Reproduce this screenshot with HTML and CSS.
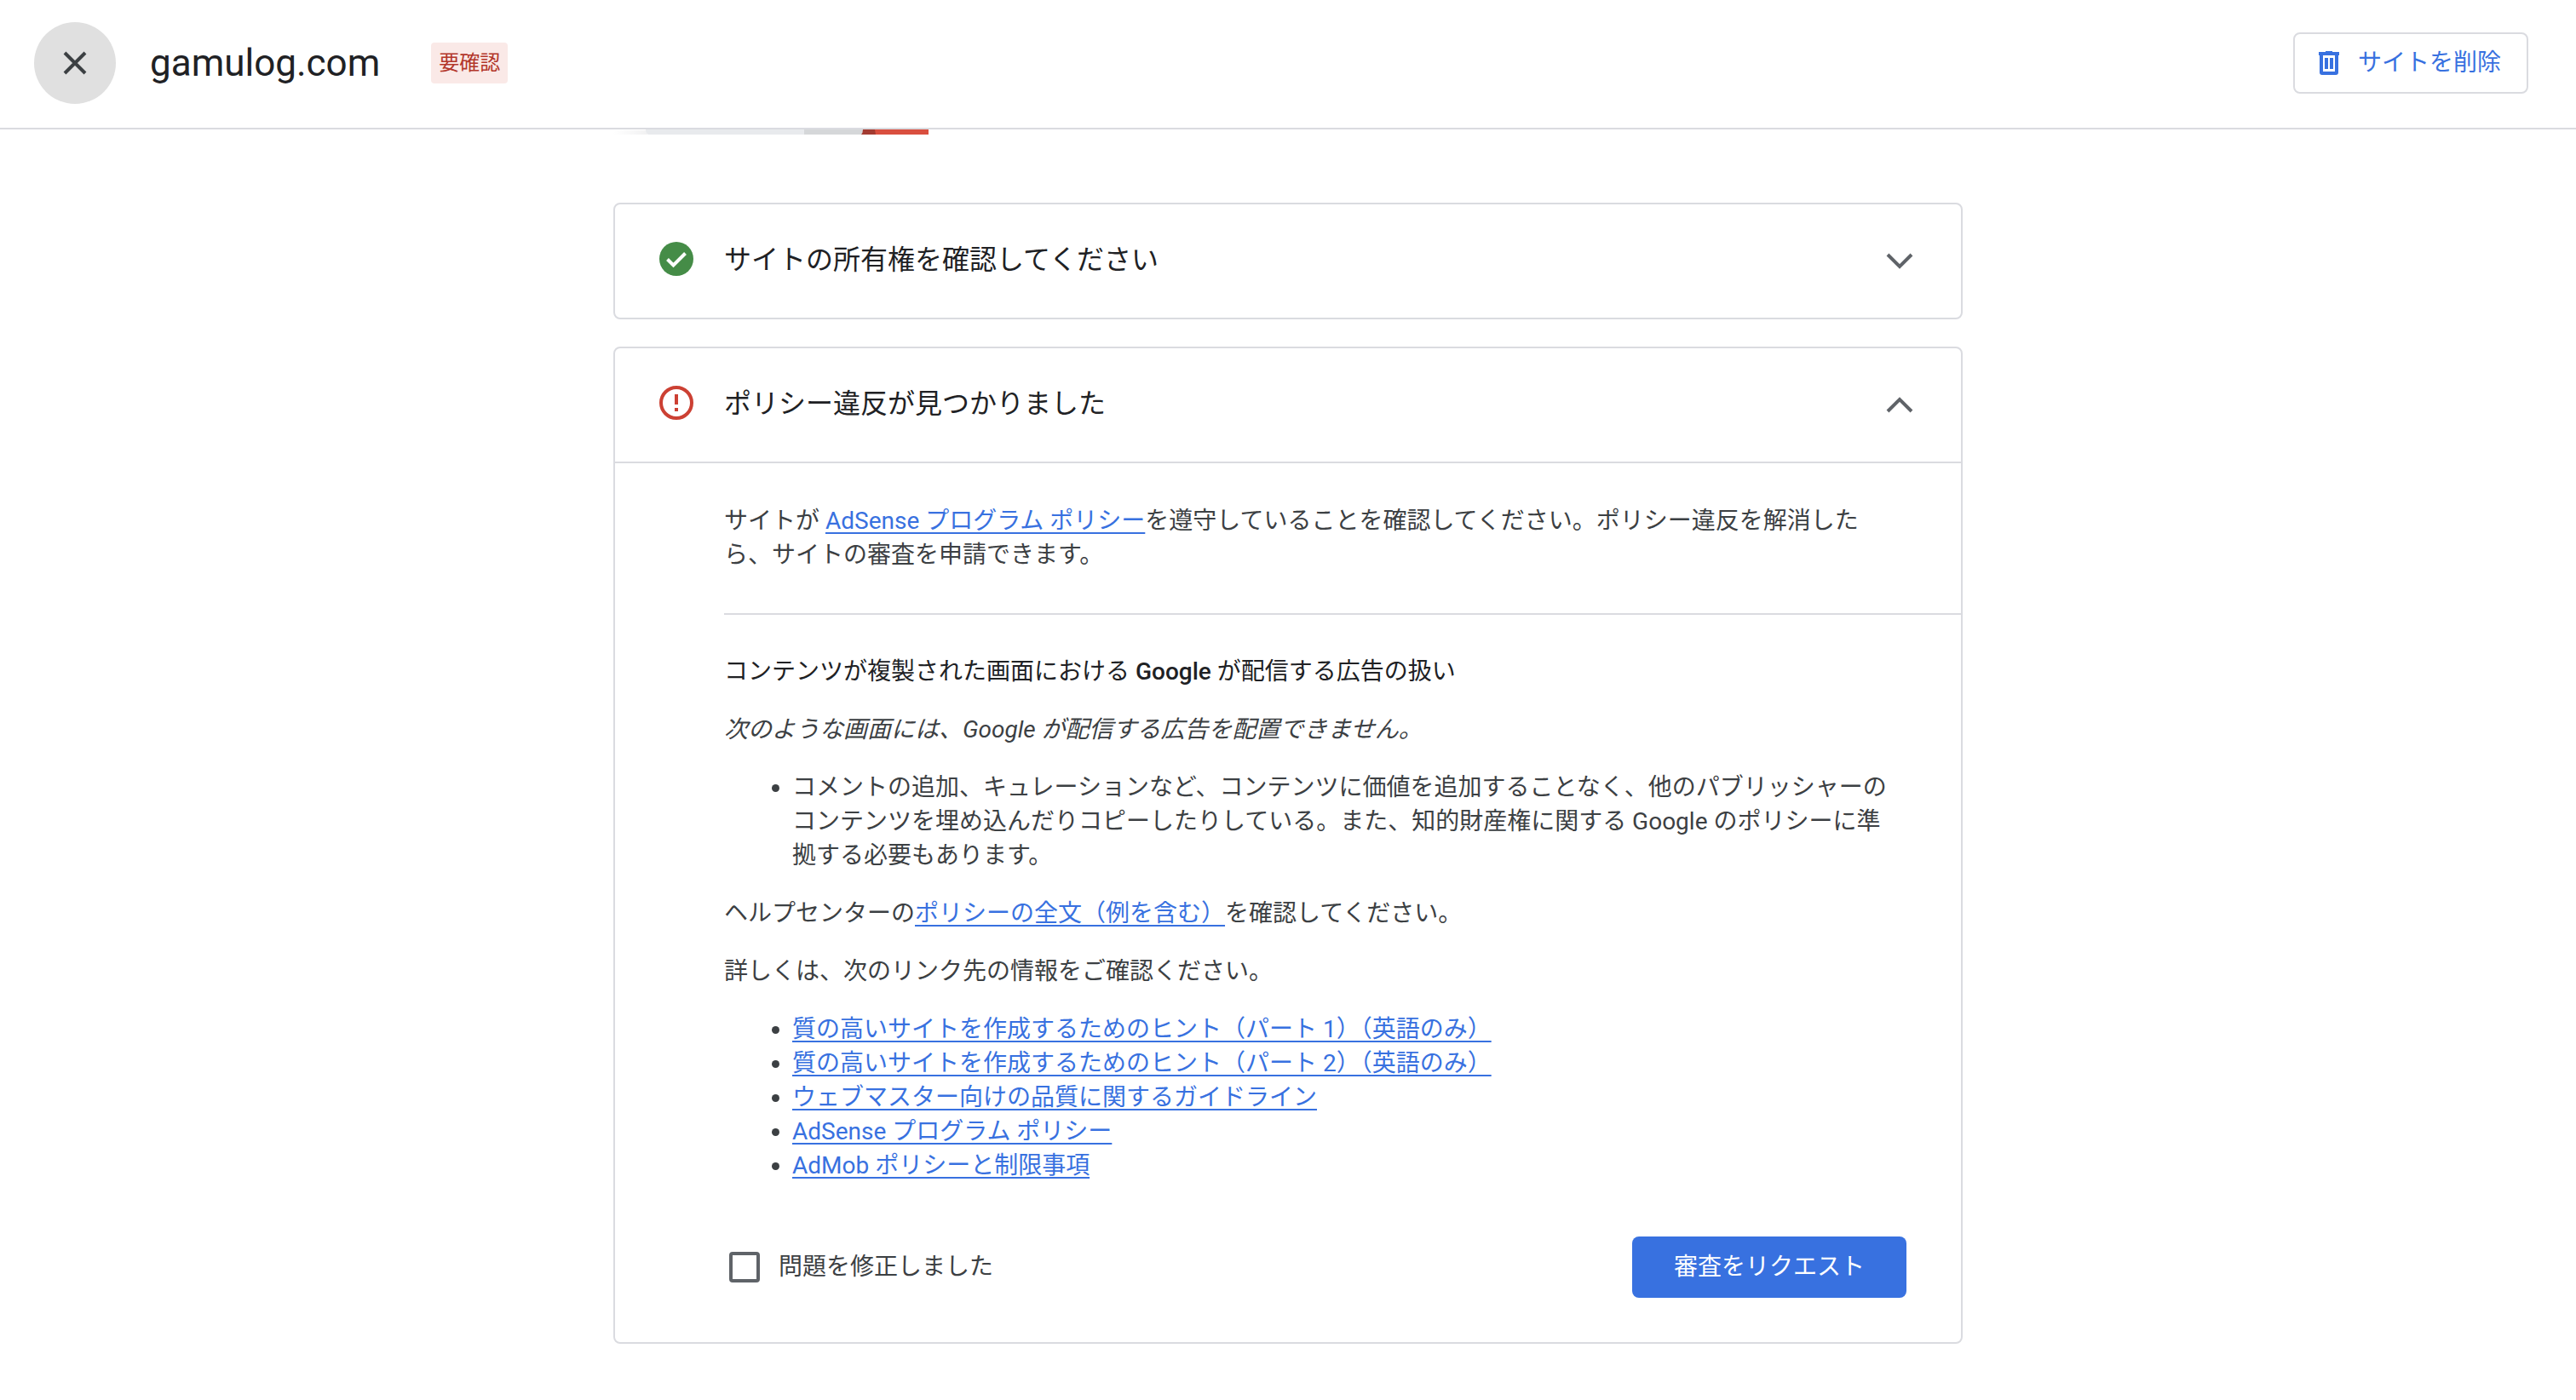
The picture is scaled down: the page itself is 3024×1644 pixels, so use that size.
FILE: index.html
```html
<!DOCTYPE html>
<html lang="ja">
<head>
<meta charset="utf-8">
<meta name="viewport" content="width=device-width, initial-scale=1">
<title>gamulog.com</title>
<link rel="stylesheet" href="styles.css">
</head>
<body>
<header class="topbar">
  <button class="close" type="button" aria-label="閉じる">
    <svg width="28" height="28" viewBox="0 0 28 28" aria-hidden="true"><path d="M2 2L26 26M26 2L2 26" fill="none" stroke="currentColor" stroke-width="4"/></svg>
  </button>
  <h1 class="site-name">gamulog.com</h1>
  <span class="status">要確認</span>
  <button class="remove" type="button">
    <svg width="24" height="28" viewBox="0 0 24 28" aria-hidden="true"><path fill="currentColor" fill-rule="evenodd" d="M8 0h8v1h8v4h-1v20a3 3 0 0 1-3 3H4a3 3 0 0 1-3-3V5H0V1h8zM5 5v19h14V5zM7 8h4v13H7zM13 8h4v13h-4z"/></svg>
    サイトを削除
  </button>
</header>

<main class="content">
  <svg class="illustration" width="370" height="6" viewBox="0 0 370 6" aria-hidden="true">
    <defs><linearGradient id="fade"><stop offset="0" stop-color="#fff"/><stop offset="1" stop-color="#f1f1f2"/></linearGradient></defs>
    <path d="M0 1h40v5H0z" fill="url(#fade)"/>
    <path d="M38 0h186v6H41q-3-2-3-6z" fill="#e8eaed"/>
    <path d="M224 0h70v6h-70z" fill="#d5d7d9"/>
    <path d="M293 0h20v6h-22q2-2 2-6z" fill="#a33b31"/>
    <path d="M307 0h63v6h-62z" fill="#d94f3f"/>
  </svg>

  <section class="card">
    <div class="card-head">
      <svg class="state" width="40" height="40" viewBox="0 0 40 40" aria-hidden="true"><circle cx="20" cy="20" r="20" fill="#458c47"/><path d="M9.500 20.500L16.500 27.500L30.500 13.500" fill="none" stroke="#fff" stroke-width="4"/></svg>
      <h2 class="card-title">サイトの所有権を確認してください</h2>
      <button class="toggle" type="button" aria-expanded="false" aria-label="開く">
        <svg width="32" height="20" viewBox="0 0 32 20" aria-hidden="true"><path d="M2 2L16 16L30 2" fill="none" stroke="currentColor" stroke-width="4"/></svg>
      </button>
    </div>
  </section>

  <section class="card">
    <div class="card-head">
      <svg class="state" width="40" height="40" viewBox="0 0 40 40" aria-hidden="true"><circle cx="20" cy="20" r="18" fill="none" stroke="#cc4033" stroke-width="4"/><path d="M18 10h4v12h-4zM18 26h4v4h-4z" fill="#cc4033"/></svg>
      <h2 class="card-title">ポリシー違反が見つかりました</h2>
      <button class="toggle" type="button" aria-expanded="true" aria-label="閉じる">
        <svg width="32" height="20" viewBox="0 0 32 20" aria-hidden="true"><path d="M2 17L16 3L30 17" fill="none" stroke="currentColor" stroke-width="4"/></svg>
      </button>
    </div>
    <div class="card-body">
      <p class="intro">サイトが <a href="#adsense">AdSense プログラム ポリシー</a>を遵守していることを確認してください。ポリシー違反を解消したら、サイトの審査を申請できます。</p>
      <div class="details">
        <h3>コンテンツが複製された画面における <b>Google</b> が配信する広告の扱い</h3>
        <p><em>次のような画面には、Google が配信する広告を配置できません。</em></p>
        <ul>
          <li>コメントの追加、キュレーションなど、コンテンツに価値を追加することなく、他のパブリッシャーのコンテンツを埋め込んだりコピーしたりしている。また、知的財産権に関する Google のポリシーに準拠する必要もあります。</li>
        </ul>
        <p>ヘルプセンターの<a href="#policy">ポリシーの全文（例を含む）</a>を確認してください。</p>
        <p>詳しくは、次のリンク先の情報をご確認ください。</p>
        <ul>
          <li><a href="#tips-1">質の高いサイトを作成するためのヒント（パート 1）（英語のみ）</a></li>
          <li><a href="#tips-2">質の高いサイトを作成するためのヒント（パート 2）（英語のみ）</a></li>
          <li><a href="#webmaster">ウェブマスター向けの品質に関するガイドライン</a></li>
          <li><a href="#adsense">AdSense プログラム ポリシー</a></li>
          <li><a href="#admob">AdMob ポリシーと制限事項</a></li>
        </ul>
      </div>
      <form class="actions">
        <label class="fixed"><input type="checkbox"><span>問題を修正しました</span></label>
        <button class="request" type="button">審査をリクエスト</button>
      </form>
    </div>
  </section>
</main>
</body>
</html>
```

FILE: styles.css
```css
:root {
  --line: #dadbe0;
  --blue: #3871e0;
  --ink: #202124;
  --text: #3c4043;
}

* {
  box-sizing: border-box;
}

body {
  margin: 0;
  background: #fff;
  color: var(--text);
  font: 28px/40px Roboto, "Noto Sans CJK JP", sans-serif;
}

h1, h2, h3, p, ul {
  margin: 0;
  font-weight: 400;
}

button {
  padding: 0;
  border: 0;
  background: none;
  font: inherit;
}

svg {
  display: block;
  flex: none;
}

a {
  color: var(--blue);
  text-decoration-thickness: 2px;
  text-underline-offset: 4px;
}

.topbar {
  display: flex;
  align-items: center;
  height: 152px;
  padding: 0 56px 2px 40px;
  border-bottom: 2px solid var(--line);
}

.close {
  display: grid;
  place-items: center;
  width: 96px;
  height: 96px;
  border-radius: 50%;
  background: #e0e0e0;
  color: var(--text);
}

.site-name {
  margin: 0 60px 0 40px;
  color: var(--ink);
  font-size: 44px;
  line-height: 56px;
}

.status {
  padding: 0 9px;
  border-radius: 4px;
  background: #fae9e7;
  color: #b3372b;
  font-size: 24px;
  line-height: 48px;
}

.remove {
  display: flex;
  align-items: center;
  gap: 22px;
  height: 72px;
  margin-left: auto;
  padding: 0 30px 0 28px;
  border: 2px solid var(--line);
  border-radius: 8px;
  color: var(--blue);
}

.content {
  display: flex;
  flex-direction: column;
  gap: 32px;
  max-width: 1584px;
  margin: 0 auto;
}

.illustration {
  margin-bottom: 48px;
}

.card {
  border: 2px solid var(--line);
  border-radius: 8px;
}

.card-head {
  display: flex;
  align-items: center;
  gap: 36px;
  min-height: 133px;
  padding: 0 56px 0 52px;
}

.state {
  margin-bottom: 6px;
}

.card-title {
  padding-bottom: 4px;
  color: var(--ink);
  font-size: 32px;
  line-height: 48px;
}

.toggle {
  margin-left: auto;
  color: #5f6368;
}

.card-body {
  padding: 0 0 52px 128px;
  border-top: 2px solid var(--line);
}

.intro {
  padding: 48px 96px 48px 0;
  border-bottom: 2px solid var(--line);
}

.details {
  display: flex;
  flex-direction: column;
  gap: 28px;
  padding: 47px 72px 63px 0;
}

.details h3 {
  color: var(--ink);
  font-size: 28px;
  line-height: 40px;
}

.details b {
  font-weight: 500;
}

.details ul {
  padding-left: 80px;
}

.actions {
  display: flex;
  align-items: center;
  justify-content: space-between;
  padding-right: 64px;
}

.fixed {
  display: flex;
  align-items: center;
  gap: 22px;
}

.fixed input {
  appearance: none;
  width: 36px;
  height: 36px;
  margin: 0 0 0 6px;
  border: 4px solid #5f6368;
  border-radius: 4px;
  background: #fff;
}

.request {
  height: 72px;
  padding: 0 49px;
  border-radius: 8px;
  background: var(--blue);
  color: #fff;
}
```
